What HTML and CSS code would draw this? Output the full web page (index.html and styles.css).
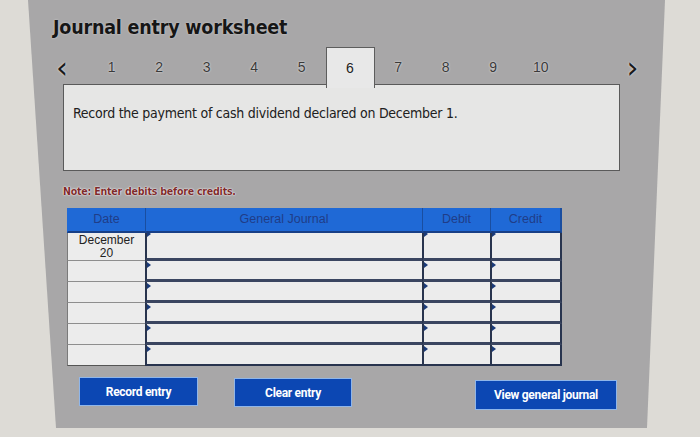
FILE: index.html
```html
<!DOCTYPE html>
<html>
<head>
<meta charset="utf-8">
<link rel="stylesheet" href="styles.css">
</head>
<body>
<div class="panel">
  <h1 class="title">Journal entry worksheet</h1>
  <div class="tabs">
    <span class="nav prev">&lsaquo;</span>
    <span class="tab">1</span>
    <span class="tab">2</span>
    <span class="tab">3</span>
    <span class="tab">4</span>
    <span class="tab">5</span>
    <span class="tab active">6</span>
    <span class="tab">7</span>
    <span class="tab">8</span>
    <span class="tab">9</span>
    <span class="tab">10</span>
    <span class="nav next">&rsaquo;</span>
  </div>
  <div class="question">Record the payment of cash dividend declared on December 1.</div>
  <p class="note">Note: Enter debits before credits.</p>
  <div class="jtable">
    <div class="th">Date</div>
    <div class="th">General Journal</div>
    <div class="th">Debit</div>
    <div class="th last">Credit</div>

    <div class="date first">December<br>20</div>
    <div class="cell first"></div>
    <div class="cell first"></div>
    <div class="cell first last"></div>

    <div class="date"></div><div class="cell"></div><div class="cell"></div><div class="cell last"></div>
    <div class="date"></div><div class="cell"></div><div class="cell"></div><div class="cell last"></div>
    <div class="date"></div><div class="cell"></div><div class="cell"></div><div class="cell last"></div>
    <div class="date"></div><div class="cell"></div><div class="cell"></div><div class="cell last"></div>
    <div class="date bottom"></div><div class="cell bottom"></div><div class="cell bottom"></div><div class="cell bottom last"></div>
  </div>
  <div class="actions">
    <button class="btn record">Record entry</button>
    <button class="btn clear">Clear entry</button>
    <button class="btn view">View general journal</button>
  </div>
</div>
</body>
</html>
```

FILE: styles.css
```css
html, body {
  margin: 0;
  padding: 0;
}
body {
  width: 700px;
  height: 437px;
  overflow: hidden;
  background: #dddbd6;
  font-family: "Liberation Sans", Arial, sans-serif;
}
.panel {
  width: 700px;
  height: 428px;
  background: #a8a7a8;
  clip-path: polygon(28px 0, 665px 0, 647px 428px, 56px 428px);
  box-sizing: border-box;
  padding-top: 15px;
}
.title {
  margin: 0 0 0 53px;
  font-size: 19.5px;
  line-height: 26px;
  font-weight: bold;
  color: #161616;
  font-family: "DejaVu Sans Condensed", "DejaVu Sans", sans-serif;
  letter-spacing: -0.2px;
  text-shadow: 0 0 2px #d8d8d8;
}
.tabs {
  display: flex;
  align-items: center;
  margin: 6px 0 -4px 52px;
  height: 41px;
}
.nav {
  font-size: 30px;
  color: #1a1a1a;
  font-family: "DejaVu Sans", sans-serif;
  line-height: 40px;
  text-shadow: 0 0 2px #eee;
}
.prev {
  width: 36px;
  padding-left: 4px;
  box-sizing: border-box;
}
.next {
  margin-left: 62px;
}
.tab {
  width: 47.5px;
  height: 41px;
  line-height: 41px;
  text-align: center;
  font-size: 14px;
  color: #3a3a3a;
  text-shadow: 0 0 2px #f4f4f4;
  box-sizing: border-box;
}
.tab.active {
  background: #e8e8e8;
  border: 1px solid #5d5d5d;
  border-bottom: none;
  width: 49px;
  position: relative;
  z-index: 1;
  color: #222;
}
.question {
  margin-left: 63px;
  width: 557px;
  height: 87px;
  box-sizing: border-box;
  border: 1px solid #5a5a5a;
  background: #e6e6e5;
  padding: 20px 9px;
  font-size: 14px;
  color: #202020;
  font-family: "DejaVu Sans Condensed", "Liberation Sans", sans-serif;
  letter-spacing: -0.25px;
}
.note {
  margin: 13px 0 0 63px;
  font-size: 10.5px;
  line-height: 14px;
  font-weight: bold;
  color: #7e2b2b;
  text-shadow: 0 0 2px #fff, 0 0 1px #fff;
  font-family: "DejaVu Sans Condensed", sans-serif;
  letter-spacing: -0.2px;
}
.jtable {
  display: grid;
  grid-template-columns: 78px 277px 68px 72px;
  grid-template-rows: 25px 28px repeat(5, 21px);
  margin: 10px 0 0 67px;
  width: 495px;
  background: #ececec;
}
.th {
  background: #1f69d6;
  color: #1f3d88;
  font-size: 12.5px;
  text-align: center;
  line-height: 23px;
  border-left: 1px solid #1a4ea0;
  border-bottom: 2px solid #183f86;
}
.th:first-child {
  border-left: 1px solid #1f69d6;
}
.th.last {
  border-right: 2px solid #1a4ea0;
}
.date {
  border-left: 1px solid #7a7a7a;
  border-bottom: 1px solid #8e8e8e;
  background: #ececec;
  text-align: center;
  font-size: 12px;
  line-height: 13px;
  color: #222;
  padding-top: 1px;
}
.cell {
  border-left: 2px solid #28344e;
  border-bottom: 3px solid #3a4560;
  background: #ececec;
  display: flex;
  align-items: flex-start;
}
.cell::before {
  content: "";
  display: block;
  width: 0;
  height: 0;
  margin-top: 1px;
  border-top: 3px solid transparent;
  border-bottom: 3px solid transparent;
  border-left: 4px solid #1a3a78;
}
.cell.first::before {
  margin-top: -2px;
}
.cell.last {
  border-right: 2px solid #28344e;
}
.date.bottom {
  border-bottom: 1px solid #555;
}
.cell.bottom {
  border-bottom: 2px solid #28344e;
}
.actions {
  display: flex;
  align-items: flex-start;
  margin: 11px 0 0 79px;
}
.btn {
  background: #0c47b3;
  color: #fff;
  border: 1px solid #8fb6ea;
  font-family: Roboto, "Liberation Sans", sans-serif;
  font-weight: bold;
  font-size: 12px;
  letter-spacing: -0.3px;
  padding: 0;
  height: 29px;
}
.record {
  width: 119px;
}
.clear {
  width: 118px;
  margin-left: 36px;
  margin-top: 1px;
}
.view {
  width: 142px;
  height: 30px;
  margin-left: 123px;
  margin-top: 3px;
}
```
